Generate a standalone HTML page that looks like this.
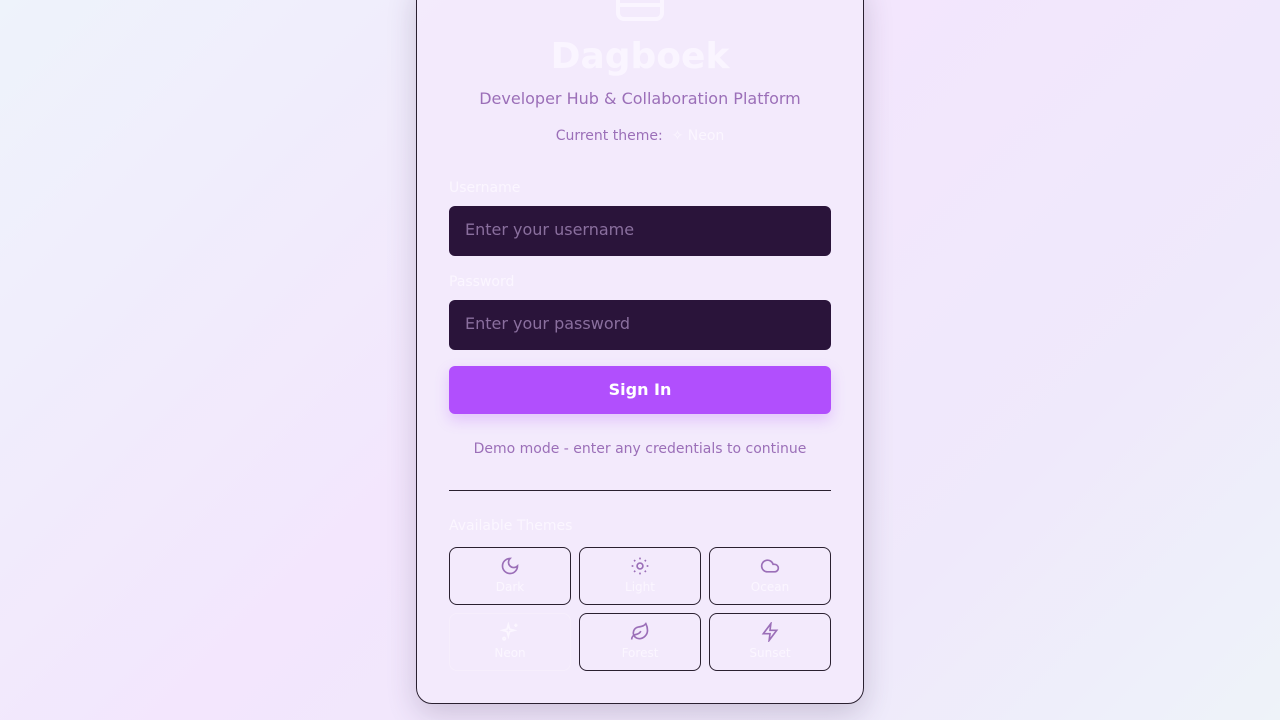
<!DOCTYPE html>
<html><head><style>
*{box-sizing:border-box;margin:0;padding:0}
body{width:1280px;height:720px;overflow:hidden;font-family:"DejaVu Sans","Liberation Sans",sans-serif;background:linear-gradient(135deg,#eef3fb 0%,#f3e6fd 45%,#efe9fb 75%,#eef3f9 100%);position:relative}
.card{position:absolute;left:416px;top:-20px;width:448px;height:724px;border:1px solid #2a2030;border-radius:16px;background:rgba(243,234,252,0.9);box-shadow:0 10px 30px rgba(60,40,80,0.2)}
.c{position:absolute;left:0;width:100%;text-align:center}
.lbl{position:absolute;left:32px;font-size:14px;color:#fbf6ff}
.inp{position:absolute;left:32px;width:382px;height:50px;border-radius:6px;background:#2a143a;color:#8a6f9e;font-size:16px;padding:14px 16px}
.btn{position:absolute;left:32px;width:382px;height:48px;border-radius:6px;background:#b14ffd;color:#fff;font-weight:bold;font-size:16px;text-align:center;line-height:48px;box-shadow:0 6px 14px rgba(177,79,253,0.25)}
.t{position:absolute;width:122px;height:58px;border:1px solid #2a2030;border-radius:8px;text-align:center;font-size:12px;color:#fbf6ff}
.t svg{display:block;margin:8px auto 4px}
</style></head><body>
<div class="card">
<svg style="position:absolute;left:199px;top:0" width="48" height="40" viewBox="0 0 48 40"><rect x="2" y="6" width="44" height="32" rx="6" fill="none" stroke="#faf5ff" stroke-width="4"/><line x1="2" y1="24" x2="46" y2="24" stroke="#faf5ff" stroke-width="4"/></svg>
<div class="c" style="top:55px;font-size:36px;font-weight:bold;color:#faf5ff">Dagboek</div>
<div class="c" style="top:108px;font-size:16px;color:#9b6fb8">Developer Hub &amp; Collaboration Platform</div>
<div class="c" style="top:147px;font-size:14px;color:#9b6fb8">Current theme: &nbsp;<span style="color:#fbf6ff">✧ Neon</span></div>
<div class="lbl" style="top:199px">Username</div>
<div class="inp" style="top:225px">Enter your username</div>
<div class="lbl" style="top:293px">Password</div>
<div class="inp" style="top:319px">Enter your password</div>
<div class="btn" style="top:385px">Sign In</div>
<div class="c" style="top:460px;font-size:14px;color:#9b6fb8">Demo mode - enter any credentials to continue</div>
<div style="position:absolute;left:32px;top:509px;width:382px;height:1px;background:#2a2030"></div>
<div class="lbl" style="top:537px">Available Themes</div>
<div class="t" style="left:32px;top:566px"><svg width="20" height="20" viewBox="0 0 24 24" fill="none" stroke="#9b6fb8" stroke-width="2"><path d="M12 3a6 6 0 0 0 9 9 9 9 0 1 1-9-9z"/></svg>Dark</div>
<div class="t" style="left:162px;top:566px"><svg width="20" height="20" viewBox="0 0 24 24" fill="none" stroke="#9b6fb8" stroke-width="2"><circle cx="12" cy="12" r="3.5"/><path d="M12 2v2M12 20v2M2 12h2M20 12h2M4.9 4.9l1.4 1.4M17.7 17.7l1.4 1.4M4.9 19.1l1.4-1.4M17.7 6.3l1.4-1.4"/></svg>Light</div>
<div class="t" style="left:292px;top:566px"><svg width="20" height="20" viewBox="0 0 24 24" fill="none" stroke="#9b6fb8" stroke-width="2"><path d="M17.5 19H9a7 7 0 1 1 6.7-9h1.8a4.5 4.5 0 1 1 0 9z"/></svg>Ocean</div>
<div class="t" style="left:32px;top:632px;border-color:#f6eefc"><svg width="20" height="20" viewBox="0 0 24 24" fill="none" stroke="#fbf6ff" stroke-width="2"><path d="M10 3l1.5 5.5L17 10l-5.5 1.5L10 17l-1.5-5.5L3 10l5.5-1.5z"/><path d="M19 2v4M17 4h4"/><circle cx="5" cy="20" r="1.5"/></svg>Neon</div>
<div class="t" style="left:162px;top:632px"><svg width="20" height="20" viewBox="0 0 24 24" fill="none" stroke="#9b6fb8" stroke-width="2"><path d="M11 20A7 7 0 0 1 9.8 6.1C15.5 5 17 4.5 19 2c1 2 2 4.2 2 8 0 5.5-4.8 10-10 10z"/><path d="M2 21c0-3 1.9-5.4 5-6 2.5-.5 5-2 6-4"/></svg>Forest</div>
<div class="t" style="left:292px;top:632px"><svg width="20" height="20" viewBox="0 0 24 24" fill="none" stroke="#9b6fb8" stroke-width="2"><path d="M13 2L4 14h8l-1 8 9-12h-8z"/></svg>Sunset</div>
</div>
</body></html>
